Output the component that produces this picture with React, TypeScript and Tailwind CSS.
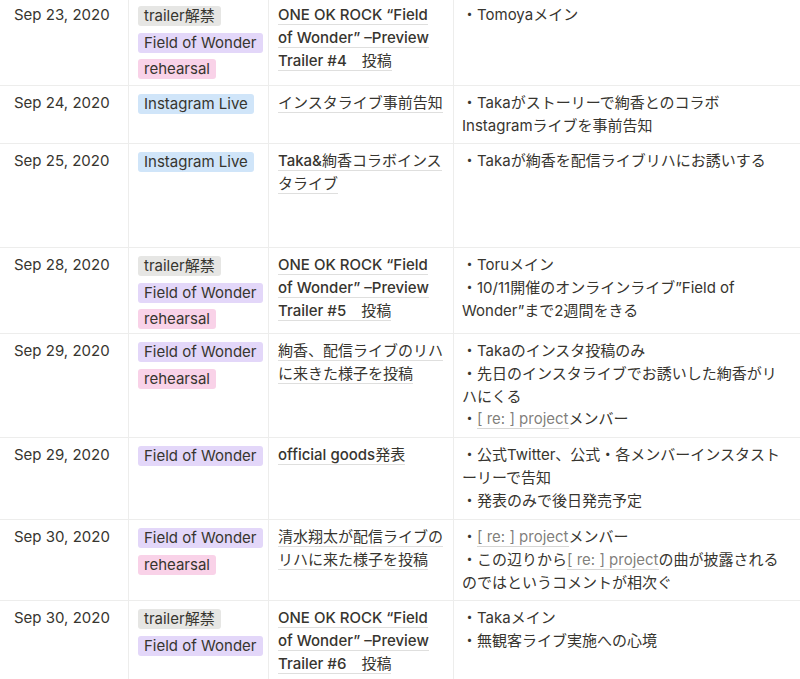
import React from "react";

type TagKind = "trailer" | "fow" | "reh" | "ig";

const TAGS: Record<TagKind, { label: string; cls: string }> = {
  trailer: { label: "trailer解禁", cls: "bg-[#e6e6e4]" },
  fow: { label: "Field of Wonder", cls: "bg-[#e3d7f9]" },
  reh: { label: "rehearsal", cls: "bg-[#f9d2e8]" },
  ig: { label: "Instagram Live", cls: "bg-[#d0e5f9]" },
};

// a note line is a list of parts; "@link" marks the page mention
type NotePart = string;
type Row = {
  h: string;
  date: string;
  tags: TagKind[];
  title: string;
  notes: NotePart[][];
};

const LINK = "@link";

const rows: Row[] = [
  {
    h: "h-[88px]",
    date: "Sep 23, 2020",
    tags: ["trailer", "fow", "reh"],
    title: "ONE OK ROCK “Field of Wonder” –Preview Trailer #4　投稿",
    notes: [["・Tomoyaメイン"]],
  },
  {
    h: "h-[58px]",
    date: "Sep 24, 2020",
    tags: ["ig"],
    title: "インスタライブ事前告知",
    notes: [["・Takaがストーリーで絢香とのコラボInstagramライブを事前告知"]],
  },
  {
    h: "h-[104px]",
    date: "Sep 25, 2020",
    tags: ["ig"],
    title: "Taka&絢香コラボインスタライブ",
    notes: [["・Takaが絢香を配信ライブリハにお誘いする"]],
  },
  {
    h: "h-[86px]",
    date: "Sep 28, 2020",
    tags: ["trailer", "fow", "reh"],
    title: "ONE OK ROCK “Field of Wonder” –Preview Trailer #5　投稿",
    notes: [
      ["・Toruメイン"],
      ["・10/11開催のオンラインライブ”Field of Wonder”まで2週間をきる"],
    ],
  },
  {
    h: "h-[104px]",
    date: "Sep 29, 2020",
    tags: ["fow", "reh"],
    title: "絢香、配信ライブのリハに来きた様子を投稿",
    notes: [
      ["・Takaのインスタ投稿のみ"],
      ["・先日のインスタライブでお誘いした絢香がリハにくる"],
      ["・", LINK, "メンバー"],
    ],
  },
  {
    h: "h-[82px]",
    date: "Sep 29, 2020",
    tags: ["fow"],
    title: "official goods発表",
    notes: [
      ["・公式Twitter、公式・各メンバーインスタストーリーで告知"],
      ["・発表のみで後日発売予定"],
    ],
  },
  {
    h: "h-[81px]",
    date: "Sep 30, 2020",
    tags: ["fow", "reh"],
    title: "清水翔太が配信ライブのリハに来た様子を投稿",
    notes: [
      ["・", LINK, "メンバー"],
      ["・この辺りから", LINK, "の曲が披露されるのではというコメントが相次ぐ"],
    ],
  },
  {
    h: "h-[110px]",
    date: "Sep 30, 2020",
    tags: ["trailer", "fow"],
    title: "ONE OK ROCK “Field of Wonder” –Preview Trailer #6　投稿",
    notes: [["・Takaメイン"], ["・無観客ライブ実施への心境"]],
  },
];

const CJK = /([\u3000-\u30ff\u4e00-\u9fff\uff00-\uffef]+)/;

function Tag({ kind }: { kind: TagKind }) {
  const t = TAGS[kind];
  return (
    <span
      className={`inline-flex h-[20px] items-center self-start whitespace-nowrap rounded-[3px] px-[6px] leading-[20px] ${t.cls}`}
    >
      {t.label}
    </span>
  );
}

// latin runs get the medium weight, japanese stays regular like the reference
function Title({ text }: { text: string }) {
  return (
    <span className="border-b border-[rgba(55,53,47,0.16)]">
      {text.split(CJK).map((seg, i) =>
        CJK.test(seg) ? (
          <React.Fragment key={i}>{seg}</React.Fragment>
        ) : (
          <span key={i} className="font-medium">
            {seg}
          </span>
        )
      )}
    </span>
  );
}

function NoteLine({ parts }: { parts: NotePart[] }) {
  return (
    <div>
      {parts.map((p, i) =>
        p === LINK ? (
          <span
            key={i}
            className="border-b border-[rgba(55,53,47,0.2)] text-[rgba(55,53,47,0.65)]"
          >
            [ re: ] project
          </span>
        ) : (
          <React.Fragment key={i}>{p}</React.Fragment>
        )
      )}
    </div>
  );
}

export default function App() {
  return (
    <div
      className="-mt-[2px] w-[800px] overflow-hidden bg-white text-[15px] leading-[22.75px] text-[#37352f] [line-break:loose]"
      style={{ fontFamily: '"Inter", "Noto Sans CJK JP", sans-serif' }}
    >
      {rows.map((r, i) => (
        <div key={i} className={`flex border-b border-[#ededec] ${r.h}`}>
          {/* Date */}
          <div className="w-[129px] shrink-0 border-r border-[#ededec] pl-[14px] pt-[6px] whitespace-nowrap">
            {r.date}
          </div>

          {/* Tags */}
          <div className="flex w-[140px] shrink-0 flex-col gap-[6.5px] border-r border-[#ededec] px-[9px] pt-[8px]">
            {r.tags.map((t) => (
              <Tag key={t} kind={t} />
            ))}
          </div>

          {/* Title */}
          <div className="w-[185px] shrink-0 border-r border-[#ededec] pl-[9px] pr-[9px] pt-[6px]">
            <Title text={r.title} />
          </div>

          {/* Notes */}
          <div className="min-w-0 flex-1 pl-[8px] pr-[12px] pt-[6px]">
            {r.notes.map((n, j) => (
              <NoteLine key={j} parts={n} />
            ))}
          </div>
        </div>
      ))}
    </div>
  );
}
